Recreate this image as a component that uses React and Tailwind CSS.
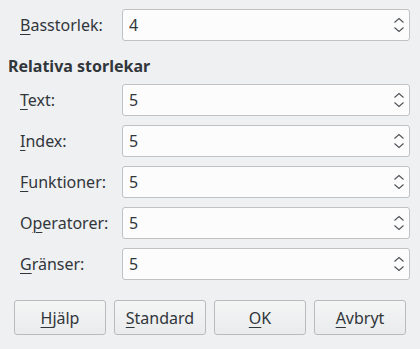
const font = { fontFamily: '"Noto Sans", "Open Sans", sans-serif' }

function Mn({ children }) {
  return <span className="underline underline-offset-[3px] decoration-1">{children}</span>
}

function Spin({ value }) {
  return (
    <div className="flex-1 h-[32px] flex items-center justify-between bg-[#fcfcfc] border border-[#bfc1c3] rounded-[3px] pl-[6px] pr-[4px]">
      <span className="text-[16px] text-[#31363b]">{value}</span>
      <svg width="12" height="16" viewBox="0 0 12 16" fill="none" stroke="#4d5257" strokeWidth="1.1">
        <path d="M1.5 5.5 L6 1.5 L10.5 5.5" />
        <path d="M1.5 10.5 L6 14.5 L10.5 10.5" />
      </svg>
    </div>
  )
}

function Row({ label, children }) {
  return (
    <div className="flex items-center h-[32px]">
      <div className="w-[122px] shrink-0 pl-[20px] text-[16px] text-[#31363b]">{label}</div>
      {children}
    </div>
  )
}

function Btn({ children }) {
  return (
    <button className="w-[92px] h-[35px] flex items-center justify-center text-[16px] text-[#31363b] rounded-[3px] border border-[#b9bbbd] bg-gradient-to-b from-[#f4f5f5] to-[#eaebec]">
      {children}
    </button>
  )
}

export default function App() {
  const rows = [
    [<><Mn>T</Mn>ext:</>, '5'],
    [<><Mn>I</Mn>ndex:</>, '5'],
    [<><Mn>F</Mn>unktioner:</>, '5'],
    [<>O<Mn>p</Mn>eratorer:</>, '5'],
    [<><Mn>G</Mn>ränser:</>, '5'],
  ]
  return (
    <div style={font} className="w-[420px] h-[349px] bg-[#eff0f1] flex flex-col pt-[9px] pr-[10px] overflow-hidden">
      <Row label={<><Mn>B</Mn>asstorlek:</>}><Spin value="4" /></Row>
      <div className="mt-[15px] h-[20px] pl-[8px] text-[16px] font-bold text-[#31363b] leading-[20px]">Relativa storlekar</div>
      <div className="mt-[8px] flex flex-col gap-[9px]">
        {rows.map(([l, v], i) => (
          <Row key={i} label={l}><Spin value={v} /></Row>
        ))}
      </div>
      <div className="mt-[20px] flex gap-[8px] pl-[14px]">
        <Btn><Mn>H</Mn>jälp</Btn>
        <Btn><Mn>S</Mn>tandard</Btn>
        <Btn><Mn>O</Mn>K</Btn>
        <Btn><Mn>A</Mn>vbryt</Btn>
      </div>
    </div>
  )
}
